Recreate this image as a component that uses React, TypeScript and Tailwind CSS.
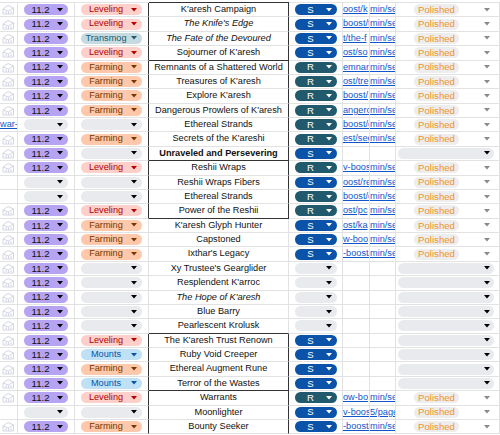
import React from "react";

type Cat = "L" | "F" | "T" | "M" | null;
type Row = {
  icon: boolean;
  aLink?: string;
  ver: boolean;
  cat: Cat;
  name: string;
  st?: "i" | "b";
  sr: "S" | "R" | null;
  f?: string;
  g?: string;
  pol: boolean;
};

const rows: Row[] = [
  { icon: true, ver: true, cat: "L", name: "K'aresh Campaign", sr: "S", f: "oost/k", g: "min/se", pol: true },
  { icon: true, ver: true, cat: "L", name: "The Knife's Edge", st: "i", sr: "S", f: "boost/t", g: "min/se", pol: true },
  { icon: true, ver: true, cat: "T", name: "The Fate of the Devoured", st: "i", sr: "S", f: "t/the-f", g: "min/se", pol: true },
  { icon: true, ver: true, cat: "L", name: "Sojourner of K'aresh", sr: "S", f: "ost/so", g: "min/se", pol: true },
  { icon: true, ver: true, cat: "F", name: "Remnants of a Shattered World", sr: "R", f: "emnan", g: "min/se", pol: true },
  { icon: true, ver: true, cat: "F", name: "Treasures of K'aresh", sr: "R", f: "ost/tre", g: "min/se", pol: true },
  { icon: true, ver: true, cat: "F", name: "Explore K'aresh", sr: "R", f: "boost/", g: "min/se", pol: true },
  { icon: true, ver: true, cat: "F", name: "Dangerous Prowlers of K'aresh", sr: "R", f: "angerc", g: "min/se", pol: true },
  { icon: false, aLink: "war-", ver: false, cat: null, name: "Ethereal Strands", sr: "R", f: "boost/e", g: "min/se", pol: true },
  { icon: true, ver: true, cat: "F", name: "Secrets of the K'areshi", sr: "R", f: "est/sec", g: "min/se", pol: true },
  { icon: true, ver: true, cat: null, name: "Unraveled and Persevering", st: "b", sr: "S", pol: false },
  { icon: true, ver: true, cat: "L", name: "Reshii Wraps", sr: "R", f: "v-boos", g: "min/se", pol: true },
  { icon: false, ver: false, cat: null, name: "Reshii Wraps Fibers", sr: "S", f: "oost/re", g: "min/se", pol: true },
  { icon: false, ver: false, cat: null, name: "Ethereal Strands", sr: "R", f: "boost/e", g: "min/se", pol: true },
  { icon: true, ver: true, cat: "L", name: "Power of the Reshii", sr: "R", f: "ost/pc", g: "min/se", pol: true },
  { icon: true, ver: true, cat: "F", name: "K'aresh Glyph Hunter", sr: "S", f: "ost/ka", g: "min/se", pol: true },
  { icon: true, ver: true, cat: "F", name: "Capstoned", sr: "S", f: "w-boo", g: "min/se", pol: true },
  { icon: true, ver: true, cat: "F", name: "Ixthar's Legacy", sr: "S", f: "-boost/", g: "min/se", pol: true },
  { icon: true, ver: true, cat: null, name: "Xy Trustee's Gearglider", sr: null, pol: false },
  { icon: true, ver: true, cat: null, name: "Resplendent K'arroc", sr: null, pol: false },
  { icon: true, ver: true, cat: null, name: "The Hope of K'aresh", st: "i", sr: null, pol: false },
  { icon: true, ver: true, cat: null, name: "Blue Barry", sr: null, pol: false },
  { icon: true, ver: true, cat: null, name: "Pearlescent Krolusk", sr: null, pol: false },
  { icon: true, ver: true, cat: "L", name: "The K'aresh Trust Renown", sr: "S", pol: false },
  { icon: true, ver: true, cat: "M", name: "Ruby Void Creeper", sr: "S", pol: false },
  { icon: true, ver: true, cat: "F", name: "Ethereal Augment Rune", sr: "S", pol: false },
  { icon: true, ver: true, cat: "M", name: "Terror of the Wastes", sr: "S", pol: false },
  { icon: true, ver: true, cat: "L", name: "Warrants", sr: "R", f: "ow-bo", g: "min/se", pol: true },
  { icon: false, ver: false, cat: null, name: "Moonlighter", sr: "S", f: "v-boos", g: "5/page", pol: true },
  { icon: true, ver: true, cat: "F", name: "Bounty Seeker", sr: "S", f: "-boost/", g: "min/se", pol: true },
];

const boxed = (i: number) => (i >= 0 && i <= 14) || i >= 23;
const boxEnd = new Set([3, 10, 14, 22, 26]);

const Arrow = ({ color }: { color: string }) => (
  <svg width="6" height="4" viewBox="0 0 6 4" className="shrink-0">
    <polygon points="0,0 6,0 3,3.5" fill={color} />
  </svg>
);

const catStyle: Record<string, { bg: string; fg: string; label: string }> = {
  L: { bg: "bg-[#ffcfc9]", fg: "#b10202", label: "Leveling" },
  F: { bg: "bg-[#ffc8aa]", fg: "#753800", label: "Farming" },
  T: { bg: "bg-[#c6dbe1]", fg: "#215a6c", label: "Transmog" },
  M: { bg: "bg-[#bfe1f6]", fg: "#0a53a8", label: "Mounts" },
};

const textColor: Record<string, string> = {
  L: "text-[#b10202]",
  F: "text-[#753800]",
  T: "text-[#215a6c]",
  M: "text-[#0a53a8]",
};

const Icon = () => (
  <svg width="13" height="11" viewBox="0 0 13 11" className="ml-[2px] shrink-0">
    <path d="M1 5 L6 1.5 L11.5 4 L11.5 10 L1 10 Z" fill="none" stroke="#d3d6e2" strokeWidth="1" />
    <path d="M1 5 L6.5 7 L11.5 4 M6.5 7 L6.5 10" fill="none" stroke="#d3d6e2" strokeWidth="1" />
    <rect x="3" y="7.5" width="2" height="1.5" fill="#dfe2ec" />
    <rect x="8" y="7.5" width="2" height="1.5" fill="#dfe2ec" />
  </svg>
);

const LinkText = ({ t }: { t: string }) => (
  <span className="block w-full overflow-hidden whitespace-nowrap text-[#1155cc] underline">{t}</span>
);

export default function App() {
  return (
    <div
      className="w-[500px] h-[435px] overflow-hidden bg-white text-[9.2px] leading-none text-[#111]"
      style={{ fontFamily: "'Liberation Sans', Arial, sans-serif" }}
    >
      <div className="flex h-[3px]">
        <div className="w-[149px] border-b border-[#e2e2e2]" />
        <div className="w-[140px] border-b border-[#333]" />
        <div className="flex-1 border-b border-[#e2e2e2]" />
      </div>
      {rows.map((r, i) => {
        const bx = boxed(i);
        const endB = boxEnd.has(i);
        const c = r.cat ? catStyle[r.cat] : null;
        return (
          <div key={i} className="flex h-[14.38px]">
            {/* A */}
            <div className="w-[18px] shrink-0 border-b border-r border-[#e2e2e2] flex items-center overflow-hidden">
              {r.icon && <Icon />}
              {r.aLink && <LinkText t={r.aLink} />}
            </div>
            {/* B */}
            <div className="w-[57px] shrink-0 border-b border-r border-[#e2e2e2] flex items-center pl-[6px]">
              <div
                className={`w-[44px] h-[11px] rounded-full flex items-center pr-[5px] ${
                  r.ver ? "bg-[#b6a3f2]" : "bg-[#e8eaed]"
                }`}
              >
                <span className="flex-1 text-center text-[9.6px]">{r.ver ? "11.2" : ""}</span>
                <Arrow color="#000" />
              </div>
            </div>
            {/* C */}
            <div
              className={`w-[74px] shrink-0 border-b border-r flex items-center pl-[6px] ${
                bx ? "border-r-[#333]" : "border-r-[#e2e2e2]"
              } border-b-[#e2e2e2]`}
            >
              <div
                className={`w-[61px] h-[11px] rounded-full flex items-center pr-[5px] ${
                  c ? c.bg : "bg-[#e8eaed]"
                }`}
              >
                <span className={`flex-1 text-center ${r.cat ? textColor[r.cat] : ""}`}>
                  {c ? c.label : ""}
                </span>
                <Arrow color={c ? c.fg : "#000"} />
              </div>
            </div>
            {/* D */}
            <div
              className={`w-[140px] shrink-0 border-b border-r flex items-center justify-center whitespace-nowrap overflow-hidden ${
                bx ? "border-r-[#333]" : "border-r-[#e2e2e2]"
              } ${endB ? "border-b-[#333]" : "border-b-[#e2e2e2]"} ${
                r.st === "i" ? "italic" : ""
              } ${r.st === "b" ? "font-bold" : ""}`}
            >
              {r.name}
            </div>
            {/* E */}
            <div className="w-[54px] shrink-0 border-b border-r border-[#e2e2e2] flex items-center pl-[6px]">
              <div
                className={`w-[42px] h-[11px] rounded-full flex items-center pr-[5px] ${
                  r.sr === "S" ? "bg-[#0a53a8]" : r.sr === "R" ? "bg-[#215a6c]" : "bg-[#e8eaed]"
                }`}
              >
                <span className="flex-1 text-center text-white text-[9.6px]">{r.sr ?? ""}</span>
                <Arrow color={r.sr ? "#fff" : "#000"} />
              </div>
            </div>
            {/* F */}
            <div className="w-[27px] shrink-0 border-b border-r border-[#e2e2e2] flex items-center overflow-hidden">
              {r.f && <LinkText t={r.f} />}
            </div>
            {/* G */}
            <div className="w-[26px] shrink-0 border-b border-r border-[#e2e2e2] flex items-center overflow-hidden">
              {r.g && <LinkText t={r.g} />}
            </div>
            {/* H */}
            <div className="flex-1 border-b border-r border-[#e2e2e2] flex items-center">
              {r.pol ? (
                <>
                  <div className="ml-[18px] w-[45px] h-[11px] rounded-full bg-[#ededed] flex items-center justify-center text-[#f0922c] text-[9.6px]">
                    Polished
                  </div>
                  <div className="ml-[25px]">
                    <Arrow color="#8a8a8a" />
                  </div>
                </>
              ) : (
                <div className="ml-[2px] w-[96px] h-[11px] rounded-full bg-[#e8eaed] flex items-center justify-end pr-[4px]">
                  <Arrow color="#000" />
                </div>
              )}
            </div>
          </div>
        );
      })}
    </div>
  );
}
